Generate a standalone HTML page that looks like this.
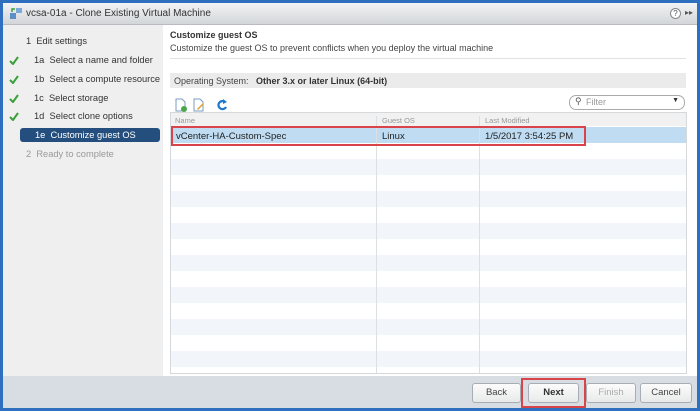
<!DOCTYPE html>
<html><head><style>
*{margin:0;padding:0;box-sizing:border-box}
body{width:700px;height:411px;overflow:hidden;background:#2f6fc0;font-family:"Liberation Sans",sans-serif;font-size:9px;color:#333;position:relative}
.win{position:absolute;left:3px;top:3px;width:694px;height:405px;background:#fff}
.title{position:absolute;left:0;top:0;width:694px;height:22px;background:linear-gradient(#f2f3f4,#d3d6d9);border-bottom:1px solid #b8bcc0}
.title span{position:absolute;left:23px;top:5px;font-size:10px;color:#333}
.left{position:absolute;left:0;top:22px;width:160px;height:351px;background:#efefef}
.left div{position:absolute;font-size:9.3px;color:#333;white-space:nowrap}
.ck{position:absolute;left:6px}
.sel{left:17px!important;width:140px;height:14px;background:#244e7d;color:#fff!important;border-radius:3px;padding:2px 0 0 15px}
.foot{position:absolute;left:0;top:373px;width:694px;height:32px;background:#d8dde3}
.btn{position:absolute;top:380px;height:20px;border:1px solid #a8adb3;border-radius:3px;background:linear-gradient(#fcfcfc,#e8e9ea);font-size:9.5px;text-align:center;line-height:18px;color:#444}
.row{position:absolute;left:168px;width:515px;height:16px}
.vl{position:absolute;top:113px;width:1px;height:257px;background:#dde0e3}
</style></head><body>
<div class="win">
<div class="title">
<svg style="position:absolute;left:6px;top:4px" width="14" height="14"><rect x="1" y="6" width="6" height="6" fill="#5b8fc7"/><rect x="7" y="1" width="6" height="5" fill="#7aa8d8"/><path d="M3 5 L3 2 L6 2" stroke="#3a9d3a" fill="none" stroke-width="1.5"/></svg>
<span>vcsa-01a - Clone Existing Virtual Machine</span>
<div style="position:absolute;left:667px;top:5px;width:11px;height:11px;border:1px solid #888;border-radius:50%;font-size:8px;text-align:center;line-height:9px;color:#555;background:#fff">?</div>
<div style="position:absolute;left:682px;top:5px;font-size:8px;color:#555">▸▸</div>
</div>
<div class="left">
<div style="left:23px;top:11px">1&nbsp; Edit settings</div>
<svg class="ck" style="top:31px" width="10" height="9"><path d="M1 5l3 3 5-7" stroke="#3aa03a" stroke-width="2" fill="none"/></svg><div style="left:31px;top:30px">1a&nbsp; Select a name and folder</div>
<svg class="ck" style="top:50px" width="10" height="9"><path d="M1 5l3 3 5-7" stroke="#3aa03a" stroke-width="2" fill="none"/></svg><div style="left:31px;top:49px">1b&nbsp; Select a compute resource</div>
<svg class="ck" style="top:69px" width="10" height="9"><path d="M1 5l3 3 5-7" stroke="#3aa03a" stroke-width="2" fill="none"/></svg><div style="left:31px;top:68px">1c&nbsp; Select storage</div>
<svg class="ck" style="top:87px" width="10" height="9"><path d="M1 5l3 3 5-7" stroke="#3aa03a" stroke-width="2" fill="none"/></svg><div style="left:31px;top:86px">1d&nbsp; Select clone options</div>
<div class="sel" style="top:103px">1e&nbsp; Customize guest OS</div>
<div style="left:23px;top:124px;color:#999">2&nbsp; Ready to complete</div>
</div>
<div style="position:absolute;left:167px;top:27px;font-size:9px;font-weight:bold;color:#333">Customize guest OS</div>
<div style="position:absolute;left:167px;top:40px;font-size:9px;color:#444">Customize the guest OS to prevent conflicts when you deploy the virtual machine</div>
<div style="position:absolute;left:167px;top:55px;width:516px;height:1px;background:#e0e2e4"></div>
<div style="position:absolute;left:167px;top:70px;width:516px;height:15px;background:#ebebeb;padding:3px 0 0 4px;color:#444">Operating System:&nbsp;&nbsp; <b style="color:#333">Other 3.x or later Linux (64-bit)</b></div>
<svg style="position:absolute;left:171px;top:95px" width="60" height="14">
<path d="M2 1h6l3 3v9H2z" fill="#fff" stroke="#7a9cc0"/><circle cx="10" cy="11" r="3" fill="#4aa84a"/>
<path d="M20 1h6l3 3v9H20z" fill="#fff" stroke="#7a9cc0"/><path d="M23 11l6-6 1 1-6 6z" fill="#e0a030"/>
<path d="M51 4a4 4 0 1 0 1 5" stroke="#1e78d0" stroke-width="2.2" fill="none"/><path d="M49 1l4 3-4 2z" fill="#1e78d0"/>
</svg>
<div style="position:absolute;left:566px;top:92px;width:116px;height:15px;border:1px solid #aaa;border-radius:7px;background:#fff;padding:1px 0 0 16px;color:#999">Filter<span style="position:absolute;left:5px;top:0;color:#555">⚲</span><span style="position:absolute;right:5px;top:1px;font-size:7px;color:#333">▼</span></div>
<div style="position:absolute;left:167px;top:109px;width:517px;height:262px;border:1px solid #d6d9dc;background:#fff"></div>
<div class="row" style="top:110px;height:13px;background:#f1f1f1;color:#999;font-size:7.5px"><span style="position:absolute;left:4px;top:3px">Name</span><span style="position:absolute;left:211px;top:3px">Guest OS</span><span style="position:absolute;left:314px;top:3px">Last Modified</span></div>
<div class="row" style="top:124px;background:#bfdcf3"></div>
<div class="row" style="top:156px;background:#f2f5f9"></div><div class="row" style="top:188px;background:#f2f5f9"></div><div class="row" style="top:220px;background:#f2f5f9"></div><div class="row" style="top:252px;background:#f2f5f9"></div><div class="row" style="top:284px;background:#f2f5f9"></div><div class="row" style="top:316px;background:#f2f5f9"></div><div class="row" style="top:348px;background:#f2f5f9"></div>
<div class="vl" style="left:373px"></div><div class="vl" style="left:476px"></div>
<div style="position:absolute;left:168px;top:123px;width:415px;height:20px;border:2px solid #d9444a"></div>
<div style="position:absolute;left:173px;top:128px;font-size:9.5px;color:#222">vCenter-HA-Custom-Spec</div>
<div style="position:absolute;left:379px;top:128px;font-size:9.5px;color:#222">Linux</div>
<div style="position:absolute;left:482px;top:128px;font-size:9.5px;color:#222">1/5/2017 3:54:25 PM</div>
<div class="foot"></div>
<div class="btn" style="left:469px;width:49px">Back</div>
<div class="btn" style="left:525px;width:51px;font-weight:bold;color:#333">Next</div>
<div style="position:absolute;left:518px;top:375px;width:65px;height:30px;border:2px solid #d9444a"></div>
<div class="btn" style="left:583px;width:50px;color:#aaa">Finish</div>
<div class="btn" style="left:637px;width:52px">Cancel</div>
</div>
</body></html>
